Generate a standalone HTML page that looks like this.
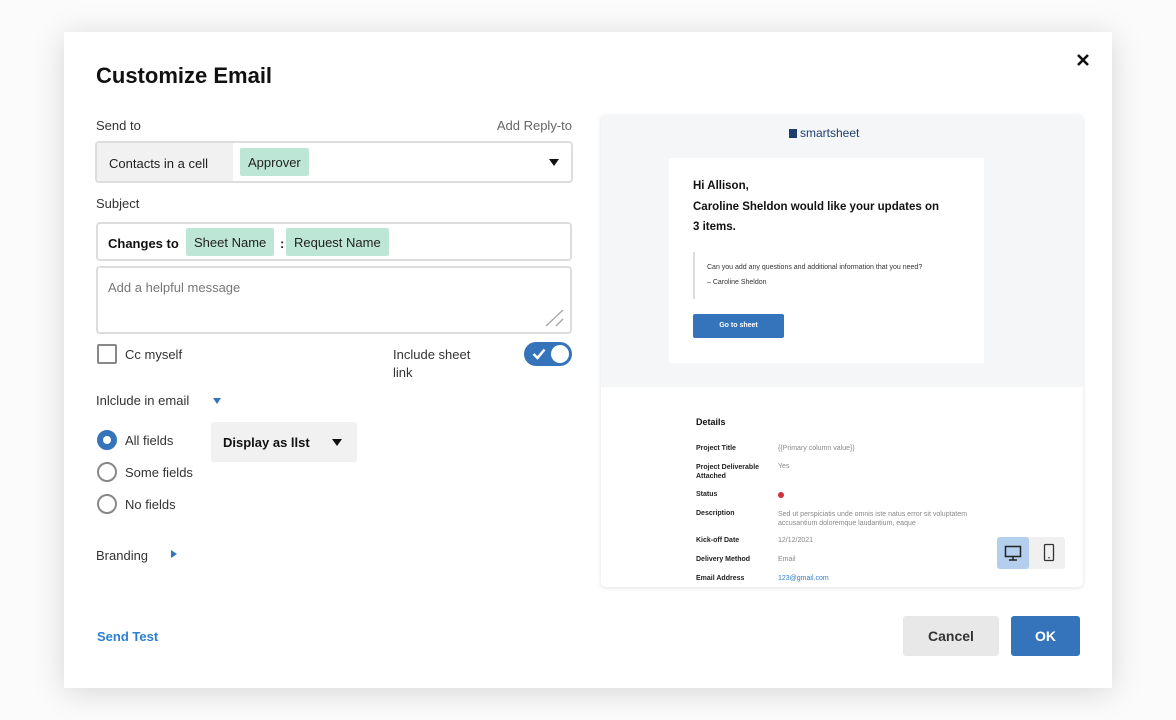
<!DOCTYPE html>
<html><head><style>
*{box-sizing:border-box;margin:0;padding:0}
body{width:1176px;height:720px;background:#fbfbfb;font-family:"Liberation Sans",sans-serif;color:#222;position:relative;overflow:hidden}
.a{position:absolute}
.dlg{left:64px;top:32px;width:1048px;height:656px;background:#fff;box-shadow:0 4px 30px rgba(0,0,0,.15)}
.t13{font-size:13px}
.pill{background:#bde6d6;border-radius:2px;font-size:13px;color:#222;height:28px;line-height:28px;padding:0 8px}
.box{border:2px solid #ddd;border-radius:4px}
.radio{width:20px;height:20px;border-radius:50%;border:2px solid #888}
.lbl{font-size:13px;color:#333}
.s{font-size:7px;color:#222;font-weight:bold}
.v{font-size:7px;color:#888}
</style></head><body>
<div class="a dlg"></div>
<div class="a" style="left:96px;top:63px;font-size:22px;font-weight:bold;color:#111">Customize Email</div>
<svg class="a" style="left:1076px;top:53px" width="14" height="14"><path d="M2 2L12 12M12 2L2 12" stroke="#111" stroke-width="2.6"/></svg>

<div class="a lbl" style="left:96px;top:118px">Send to</div>
<div class="a lbl" style="right:604px;top:118px;color:#666">Add Reply-to</div>
<div class="a box" style="left:95px;top:141px;width:478px;height:42px;overflow:hidden">
 <div class="a" style="left:0;top:0;width:136px;height:38px;background:#f1f1f1"></div>
 <div class="a t13" style="left:12px;top:13px">Contacts in a cell</div>
 <div class="a pill" style="left:143px;top:5px;line-height:30px">Approver</div>
 <div class="a" style="left:452px;top:16px;border-left:5px solid transparent;border-right:5px solid transparent;border-top:7px solid #111"></div>
</div>
<div class="a lbl" style="left:96px;top:196px">Subject</div>
<div class="a box" style="left:96px;top:222px;width:476px;height:39px">
 <div class="a t13" style="left:10px;top:12px;font-weight:bold;color:#111">Changes to</div>
 <div class="a pill" style="left:88px;top:4px;line-height:30px">Sheet Name</div>
 <div class="a t13" style="left:182px;top:12px;font-weight:bold">:</div>
 <div class="a pill" style="left:188px;top:4px;line-height:30px">Request Name</div>
</div>
<div class="a box" style="left:96px;top:266px;width:476px;height:68px">
 <div class="a t13" style="left:10px;top:12px;color:#777">Add a helpful message</div>
 <svg class="a" style="left:446px;top:40px" width="22" height="20"><path d="M2 18L19 2M12 18L19 11" stroke="#aaa" stroke-width="1.5"/></svg>
</div>
<div class="a" style="left:97px;top:344px;width:20px;height:20px;border:2px solid #888;border-radius:2px"></div>
<div class="a lbl" style="left:125px;top:347px">Cc myself</div>
<div class="a lbl" style="left:393px;top:346px;line-height:18px">Include sheet<br>link</div>
<div class="a" style="left:524px;top:342px;width:48px;height:24px;border-radius:12px;background:#3574bb">
 <svg class="a" style="left:8px;top:5px" width="14" height="14"><path d="M1.5 7L5.5 11L12.5 2.5" stroke="#fff" stroke-width="2.5" fill="none"/></svg>
 <div class="a" style="left:27px;top:3px;width:18px;height:18px;border-radius:50%;background:#fff"></div>
</div>

<div class="a lbl" style="left:96px;top:393px">Inlclude in email</div>
<div class="a" style="left:213px;top:398px;border-left:4.5px solid transparent;border-right:4.5px solid transparent;border-top:6px solid #3574bb"></div>
<div class="a radio" style="left:97px;top:430px;border:6px solid #3574bb"></div>
<div class="a lbl" style="left:125px;top:433px">All fields</div>
<div class="a radio" style="left:97px;top:462px"></div>
<div class="a lbl" style="left:125px;top:465px">Some fields</div>
<div class="a radio" style="left:97px;top:494px"></div>
<div class="a lbl" style="left:125px;top:497px">No fields</div>
<div class="a" style="left:211px;top:422px;width:146px;height:40px;background:#f1f1f1;border-radius:3px">
 <div class="a t13" style="left:12px;top:13px;font-weight:bold;color:#111">Display as llst</div>
 <div class="a" style="left:121px;top:17px;border-left:5px solid transparent;border-right:5px solid transparent;border-top:7px solid #111"></div>
</div>
<div class="a lbl" style="left:96px;top:548px">Branding</div>
<div class="a" style="left:171px;top:550px;border-top:4.5px solid transparent;border-bottom:4.5px solid transparent;border-left:6px solid #3574bb"></div>

<div class="a" style="left:601px;top:115px;width:482px;height:472px;border-radius:5px;background:#fff;box-shadow:0 1px 4px rgba(0,0,0,.12);overflow:hidden">
 <div class="a" style="left:0;top:0;width:482px;height:272px;background:#f5f6f8"></div>
 <div class="a" style="left:188px;top:14px;width:8px;height:9px;background:#1c3d6e"></div>
 <div class="a" style="left:199px;top:11px;font-size:12px;color:#1c3d6e">smartsheet</div>
 <div class="a" style="left:68px;top:43px;width:315px;height:205px;background:#fff">
  <div class="a" style="left:24px;top:18px;font-size:11.5px;font-weight:bold;line-height:20.5px;color:#111">Hi Allison,<br>Caroline Sheldon would like your updates on<br>3 items.</div>
  <div class="a" style="left:24px;top:94px;width:2px;height:47px;background:#ddd"></div>
  <div class="a" style="left:38px;top:102px;font-size:7px;line-height:15px;color:#333">Can you add any questions and additional information that you need?<br>– Caroline Sheldon</div>
  <div class="a" style="left:24px;top:156px;width:91px;height:24px;background:#3574bb;border-radius:2px;color:#fff;font-size:7px;font-weight:bold;text-align:center;line-height:24px">Go to sheet</div>
 </div>
 <div class="a" style="left:95px;top:302px;font-size:9px;font-weight:bold;color:#111">Details</div>
 <div class="a s" style="left:95px;top:330px">Project Title</div><div class="a v" style="left:177px;top:330px">{{Primary column value}}</div>
 <div class="a s" style="left:95px;top:348px;line-height:9px">Project Deliverable<br>Attached</div><div class="a v" style="left:177px;top:348px">Yes</div>
 <div class="a s" style="left:95px;top:376px">Status</div><div class="a" style="left:177px;top:377px;width:6px;height:6px;border-radius:50%;background:#d0313b"></div>
 <div class="a s" style="left:95px;top:395px">Description</div><div class="a v" style="left:177px;top:395px;line-height:9px">Sed ut perspiciatis unde omnis iste natus error sit voluptatem<br>accusantium doloremque laudantium, eaque</div>
 <div class="a s" style="left:95px;top:422px">Kick-off Date</div><div class="a v" style="left:177px;top:422px">12/12/2021</div>
 <div class="a s" style="left:95px;top:441px">Delivery Method</div><div class="a v" style="left:177px;top:441px">Email</div>
 <div class="a s" style="left:95px;top:460px">Email Address</div><div class="a v" style="left:177px;top:460px;color:#2d7fd0">123@gmail.com</div>
 <div class="a" style="left:396px;top:422px;width:68px;height:32px;background:#f0f0f0;border-radius:3px"></div>
 <div class="a" style="left:396px;top:422px;width:32px;height:32px;background:#b3cfed;border-radius:3px"></div>
 <svg class="a" style="left:402px;top:428px" width="20" height="20"><rect x="2.5" y="3.5" width="15" height="10" fill="none" stroke="#222" stroke-width="1.5"/><path d="M10 14V17M6 17H14" stroke="#222" stroke-width="1.5"/></svg>
 <svg class="a" style="left:438px;top:428px" width="20" height="20"><rect x="5.5" y="1.5" width="9" height="16" rx="1" fill="none" stroke="#333" stroke-width="1.3"/><rect x="9.3" y="14" width="1.4" height="1.4" fill="#333"/></svg>
</div>

<div class="a" style="left:97px;top:629px;font-size:13px;font-weight:bold;color:#2d7fd0">Send Test</div>
<div class="a" style="left:903px;top:616px;width:96px;height:40px;background:#e8e8e8;border-radius:3px;font-size:14px;font-weight:bold;color:#333;text-align:center;line-height:40px">Cancel</div>
<div class="a" style="left:1011px;top:616px;width:69px;height:40px;background:#3574bb;border-radius:3px;font-size:14px;font-weight:bold;color:#fff;text-align:center;line-height:40px">OK</div>
</body></html>
